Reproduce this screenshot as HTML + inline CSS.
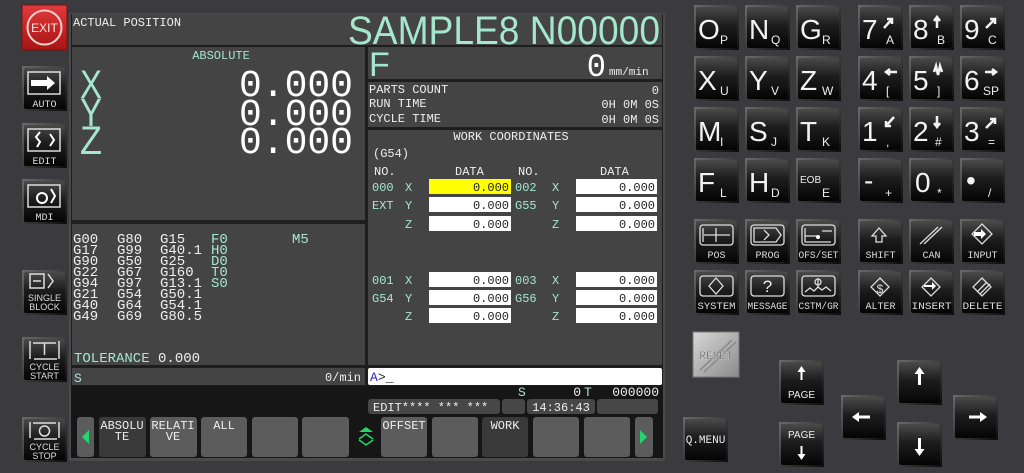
<!DOCTYPE html>
<html><head><meta charset="utf-8"><style>
html,body{margin:0;padding:0;background:#3b3a3f;width:1024px;height:473px;overflow:hidden}
svg{display:block}
.m{font-family:"Liberation Mono",monospace}
.s{font-family:"Liberation Sans",sans-serif}
</style></head><body>
<svg width="1024" height="473" viewBox="0 0 1024 473" xmlns="http://www.w3.org/2000/svg">
<defs>
<linearGradient id="kg" x1="0" y1="0" x2="0" y2="1">
<stop offset="0" stop-color="#4a4a4a"/><stop offset="0.45" stop-color="#1c1c1c"/><stop offset="1" stop-color="#050505"/>
</linearGradient>
<linearGradient id="kb" x1="0" y1="0" x2="1" y2="1">
<stop offset="0" stop-color="#6a6a6a"/><stop offset="1" stop-color="#0c0c0c"/>
</linearGradient>
<linearGradient id="rg" x1="0" y1="0" x2="1" y2="1">
<stop offset="0" stop-color="#d8d8d8"/><stop offset="1" stop-color="#8a8a8a"/>
</linearGradient>
<linearGradient id="eg" x1="0" y1="0" x2="0" y2="1">
<stop offset="0" stop-color="#e23a3a"/><stop offset="1" stop-color="#a81414"/>
</linearGradient>
<symbol id="k" viewBox="0 0 45 45">
<rect x="0" y="0" width="45" height="45" fill="url(#kb)"/>
<rect x="2" y="2" width="41" height="41" rx="2" fill="url(#kg)"/>
</symbol>
</defs>

<rect x="22" y="5" width="45" height="45" fill="url(#eg)" stroke="#7a1010"/>
<circle cx="44.5" cy="27.5" r="17" fill="none" stroke="#f2d0d0" stroke-width="2"/>
<text x="44.5" y="32" class="s" font-size="12" fill="#f6e6e6" text-anchor="middle">EXIT</text>

<use href="#k" x="22" y="66" width="45" height="45"/>
<rect x="28" y="72" width="32" height="22" fill="none" stroke="#ddd" stroke-width="1.5"/>
<path d="M31 80h16v-4l8 7-8 7v-4h-16z" fill="#fff"/>
<text x="44.5" y="107" class="m" font-size="10" fill="#ddd" text-anchor="middle">AUTO</text>

<use href="#k" x="22" y="123" width="45" height="45"/>
<rect x="28" y="129" width="32" height="22" fill="none" stroke="#ddd" stroke-width="1.5"/>
<path d="M40 132l-4 5 4 5-3 5M50 134l4 6-4 6" fill="none" stroke="#fff" stroke-width="2"/>
<text x="44.5" y="164" class="m" font-size="10" fill="#ddd" text-anchor="middle">EDIT</text>

<use href="#k" x="22" y="179" width="45" height="45"/>
<rect x="28" y="185" width="32" height="22" fill="none" stroke="#ddd" stroke-width="1.5"/>
<circle cx="42" cy="198" r="5" fill="none" stroke="#fff" stroke-width="2"/><path d="M51 189l4 7-4 7" fill="none" stroke="#fff" stroke-width="2"/>
<text x="44.5" y="220" class="m" font-size="10" fill="#ddd" text-anchor="middle">MDI</text>

<use href="#k" x="22" y="270" width="45" height="45"/>
<rect x="30" y="274" width="14" height="14" fill="none" stroke="#ddd" stroke-width="1.5"/><path d="M33 281h8M48 274l5 7-5 7" stroke="#ddd" fill="none" stroke-width="1.5"/>
<text x="44.5" y="301" class="s" font-size="9" fill="#ddd" text-anchor="middle">SINGLE</text>
<text x="44.5" y="310" class="s" font-size="9" fill="#ddd" text-anchor="middle">BLOCK</text>

<use href="#k" x="22" y="337" width="45" height="45"/>
<path d="M30 341v18M59 341v18M33 343h23M44.5 343v12M34 359h23" stroke="#ddd" fill="none" stroke-width="1.5"/>
<text x="44.5" y="370" class="s" font-size="9" fill="#ddd" text-anchor="middle">CYCLE</text>
<text x="44.5" y="379" class="s" font-size="9" fill="#ddd" text-anchor="middle">START</text>

<use href="#k" x="22" y="417" width="45" height="45"/>
<path d="M30 422v16M59 422v16M33 423h23M34 439h23" stroke="#ddd" fill="none" stroke-width="1.5"/><circle cx="44.5" cy="431" r="5" fill="none" stroke="#ddd" stroke-width="1.5"/>
<text x="44.5" y="450" class="s" font-size="9" fill="#ddd" text-anchor="middle">CYCLE</text>
<text x="44.5" y="459" class="s" font-size="9" fill="#ddd" text-anchor="middle">STOP</text>

<rect x="69" y="13" width="596" height="448" fill="#4a4a4a"/>
<rect x="71" y="14" width="592" height="444" fill="#1e1e1e"/>
<rect x="72" y="14" width="590" height="31" fill="#444"/>
<text x="73" y="26" class="m" font-size="12" fill="#eee">ACTUAL POSITION</text>
<text x="348" y="44" class="s" font-size="40" fill="#a5e6cf" textLength="312" lengthAdjust="spacingAndGlyphs">SAMPLE8 N00000</text>

<rect x="72" y="47" width="293" height="173" fill="#444"/>
<text x="221" y="59" class="m" font-size="12" fill="#a5e6cf" text-anchor="middle">ABSOLUTE</text>
<g class="s" font-size="40" fill="#a5e6cf">
<text x="80" y="98" textLength="22" lengthAdjust="spacingAndGlyphs">X</text>
<text x="80" y="126" textLength="22" lengthAdjust="spacingAndGlyphs">Y</text>
<text x="80" y="154" textLength="22" lengthAdjust="spacingAndGlyphs">Z</text>
</g>
<g class="m" font-size="38" fill="#fff" text-anchor="end">
<text x="353" y="96">0.000</text>
<text x="353" y="125">0.000</text>
<text x="353" y="153">0.000</text>
</g>

<rect x="72" y="224" width="293" height="141" fill="#444"/>
<g class="m" font-size="14" fill="#eee">
<text x="73" y="243"><tspan>G00</tspan><tspan x="117">G80</tspan><tspan x="160">G15</tspan><tspan x="211" fill="#a5e6cf">F0</tspan><tspan x="292" fill="#a5e6cf">M5</tspan></text>
<text x="73" y="254"><tspan>G17</tspan><tspan x="117">G99</tspan><tspan x="160">G40.1</tspan><tspan x="211" fill="#a5e6cf">H0</tspan></text>
<text x="73" y="265"><tspan>G90</tspan><tspan x="117">G50</tspan><tspan x="160">G25</tspan><tspan x="211" fill="#a5e6cf">D0</tspan></text>
<text x="73" y="276"><tspan>G22</tspan><tspan x="117">G67</tspan><tspan x="160">G160</tspan><tspan x="211" fill="#a5e6cf">T0</tspan></text>
<text x="73" y="287"><tspan>G94</tspan><tspan x="117">G97</tspan><tspan x="160">G13.1</tspan><tspan x="211" fill="#a5e6cf">S0</tspan></text>
<text x="73" y="298"><tspan>G21</tspan><tspan x="117">G54</tspan><tspan x="160">G50.1</tspan></text>
<text x="73" y="309"><tspan>G40</tspan><tspan x="117">G64</tspan><tspan x="160">G54.1</tspan></text>
<text x="73" y="320"><tspan>G49</tspan><tspan x="117">G69</tspan><tspan x="160">G80.5</tspan></text>
</g>
<text x="74" y="362" class="m" font-size="14" fill="#a5e6cf">TOLERANCE <tspan fill="#eee">0.000</tspan></text>

<rect x="72" y="368" width="293" height="17" fill="#444"/>
<text x="74" y="382" class="m" font-size="13" fill="#a5e6cf">S</text>
<text x="361" y="381" class="m" font-size="12" fill="#eee" text-anchor="end">0/min</text>

<rect x="368" y="47" width="294" height="32" fill="#444"/>
<text x="369" y="76" class="s" font-size="34" fill="#a5e6cf">F</text>
<text x="606" y="76" class="m" font-size="32" fill="#fff" text-anchor="end">0</text>
<text x="609" y="75" class="m" font-size="11" fill="#eee">mm/min</text>

<rect x="368" y="82" width="294" height="45" fill="#444"/>
<g class="m" font-size="12" fill="#eee">
<text x="369" y="93">PARTS COUNT</text><text x="659" y="94" text-anchor="end">0</text>
<text x="369" y="107">RUN TIME</text><text x="659" y="108" text-anchor="end">0H 0M 0S</text>
<text x="369" y="122">CYCLE TIME</text><text x="659" y="123" text-anchor="end">0H 0M 0S</text>
</g>

<rect x="368" y="130" width="294" height="235" fill="#444"/>
<g class="m" font-size="12" fill="#eee">
<text x="511" y="140" text-anchor="middle">WORK COORDINATES</text>
<text x="373" y="157">(G54)</text>
<text x="374" y="175">NO.</text><text x="455" y="175">DATA</text><text x="518" y="175">NO.</text><text x="600" y="175">DATA</text>
</g>
<g class="m" font-size="12" fill="#a5e6cf">
<text x="372" y="191">000</text><text x="405" y="191">X</text><text x="515" y="191">002</text><text x="552" y="191">X</text>
<text x="372" y="209">EXT</text><text x="405" y="209">Y</text><text x="515" y="209">G55</text><text x="552" y="209">Y</text>
<text x="405" y="228">Z</text><text x="552" y="228">Z</text>
<text x="372" y="284">001</text><text x="405" y="284">X</text><text x="515" y="284">003</text><text x="552" y="284">X</text>
<text x="372" y="302">G54</text><text x="405" y="302">Y</text><text x="515" y="302">G56</text><text x="552" y="302">Y</text>
<text x="405" y="320">Z</text><text x="552" y="320">Z</text>
</g>
<g fill="#fff">
<rect x="429" y="179" width="82" height="15" fill="#ffff00"/><rect x="576" y="179" width="81" height="15"/>
<rect x="429" y="197" width="82" height="15"/><rect x="576" y="197" width="81" height="15"/>
<rect x="429" y="216" width="82" height="15"/><rect x="576" y="216" width="81" height="15"/>
<rect x="429" y="272" width="82" height="15"/><rect x="576" y="272" width="81" height="15"/>
<rect x="429" y="290" width="82" height="15"/><rect x="576" y="290" width="81" height="15"/>
<rect x="429" y="308" width="82" height="15"/><rect x="576" y="308" width="81" height="15"/>
</g>
<g class="m" font-size="12" fill="#222" text-anchor="end">
<text x="509" y="191">0.000</text><text x="655" y="191">0.000</text>
<text x="509" y="209">0.000</text><text x="655" y="209">0.000</text>
<text x="509" y="228">0.000</text><text x="655" y="228">0.000</text>
<text x="509" y="284">0.000</text><text x="655" y="284">0.000</text>
<text x="509" y="302">0.000</text><text x="655" y="302">0.000</text>
<text x="509" y="320">0.000</text><text x="655" y="320">0.000</text>
</g>

<rect x="368" y="368" width="294" height="17" rx="2" fill="#fff"/>
<text x="370" y="381" class="m" font-size="13" fill="#2323d0">A<tspan fill="#222">&gt;_</tspan></text>

<rect x="71" y="386" width="592" height="72" fill="#161616"/>
<g class="m" font-size="13">
<text x="518" y="396" fill="#a5e6cf">S</text>
<text x="581" y="396" fill="#eee" text-anchor="end">0</text>
<text x="584" y="396" fill="#a5e6cf">T</text>
<text x="659" y="396" fill="#eee" text-anchor="end">000000</text>
</g>
<g fill="#474747">
<rect x="368" y="399" width="132" height="15" rx="3"/>
<rect x="502" y="399" width="23" height="15" rx="3"/>
<rect x="527" y="399" width="68" height="15" rx="3"/>
<rect x="597" y="399" width="61" height="15" rx="3"/>
</g>
<text x="373" y="411" class="m" font-size="12" fill="#eee">EDIT**** *** ***</text>
<text x="561" y="411" class="m" font-size="12" fill="#eee" text-anchor="middle">14:36:43</text>

<g fill="#5c5c5c">
<rect x="77" y="417" width="17" height="40" rx="3"/>
<rect x="99" y="417" width="47" height="40" rx="3" fill="#3a3a3a"/>
<rect x="150" y="417" width="47" height="40" rx="3"/>
<rect x="201" y="417" width="46" height="40" rx="3"/>
<rect x="252" y="417" width="46" height="40" rx="3"/>
<rect x="302" y="417" width="47" height="40" rx="3"/>
<rect x="381" y="417" width="46" height="40" rx="3"/>
<rect x="432" y="417" width="46" height="40" rx="3"/>
<rect x="482" y="417" width="46" height="40" rx="3" fill="#3a3a3a"/>
<rect x="533" y="417" width="46" height="40" rx="3"/>
<rect x="584" y="417" width="46" height="40" rx="3"/>
<rect x="635" y="417" width="18" height="40" rx="3"/>
</g>
<path d="M82 437l7-7v14z" fill="#22d86a"/>
<path d="M640 430l7 7-7 7z" fill="#22d86a"/>
<path d="M359 432l7-5 7 5z" fill="#22d86a"/><path d="M359 439l7-5 7 5M359 440l7 5 7-5" fill="none" stroke="#22d86a" stroke-width="1.5"/>
<g class="m" font-size="12" fill="#eee" text-anchor="middle">
<text x="122" y="429">ABSOLU</text><text x="122" y="440">TE</text>
<text x="173" y="429">RELATI</text><text x="173" y="440">VE</text>
<text x="224" y="429">ALL</text>
<text x="404" y="429">OFFSET</text>
<text x="505" y="429">WORK</text>
</g>

<g>
<use href="#k" x="694" y="5" width="45" height="45"/><use href="#k" x="745" y="5" width="45" height="45"/><use href="#k" x="796" y="5" width="45" height="45"/>
<use href="#k" x="858" y="5" width="45" height="45"/><use href="#k" x="909" y="5" width="45" height="45"/><use href="#k" x="960" y="5" width="45" height="45"/>
<use href="#k" x="694" y="56" width="45" height="45"/><use href="#k" x="745" y="56" width="45" height="45"/><use href="#k" x="796" y="56" width="45" height="45"/>
<use href="#k" x="858" y="56" width="45" height="45"/><use href="#k" x="909" y="56" width="45" height="45"/><use href="#k" x="960" y="56" width="45" height="45"/>
<use href="#k" x="694" y="107" width="45" height="45"/><use href="#k" x="745" y="107" width="45" height="45"/><use href="#k" x="796" y="107" width="45" height="45"/>
<use href="#k" x="858" y="107" width="45" height="45"/><use href="#k" x="909" y="107" width="45" height="45"/><use href="#k" x="960" y="107" width="45" height="45"/>
<use href="#k" x="694" y="158" width="45" height="45"/><use href="#k" x="745" y="158" width="45" height="45"/><use href="#k" x="796" y="158" width="45" height="45"/>
<use href="#k" x="858" y="158" width="45" height="45"/><use href="#k" x="909" y="158" width="45" height="45"/><use href="#k" x="960" y="158" width="45" height="45"/>
<use href="#k" x="694" y="219" width="45" height="45"/><use href="#k" x="745" y="219" width="45" height="45"/><use href="#k" x="796" y="219" width="45" height="45"/>
<use href="#k" x="858" y="219" width="45" height="45"/><use href="#k" x="909" y="219" width="45" height="45"/><use href="#k" x="960" y="219" width="45" height="45"/>
<use href="#k" x="694" y="270" width="45" height="45"/><use href="#k" x="745" y="270" width="45" height="45"/><use href="#k" x="796" y="270" width="45" height="45"/>
<use href="#k" x="858" y="270" width="45" height="45"/><use href="#k" x="909" y="270" width="45" height="45"/><use href="#k" x="960" y="270" width="45" height="45"/>
</g>
<g class="s" fill="#f2f2f2" font-size="28">
<text x="698" y="39">O</text><text x="749" y="39">N</text><text x="800" y="39">G</text>
<text x="862" y="39">7</text><text x="913" y="39">8</text><text x="964" y="39">9</text>
<text x="698" y="90">X</text><text x="749" y="90">Y</text><text x="800" y="90">Z</text>
<text x="862" y="90">4</text><text x="913" y="90">5</text><text x="964" y="90">6</text>
<text x="698" y="141">M</text><text x="749" y="141">S</text><text x="800" y="141">T</text>
<text x="862" y="141">1</text><text x="913" y="141">2</text><text x="964" y="141">3</text>
<text x="698" y="192">F</text><text x="749" y="192">H</text>
<text x="864" y="190">-</text><text x="915" y="192">0</text><text x="966" y="190">•</text>
</g>
<text x="800" y="183" class="s" font-size="10" fill="#eee">EOB</text>
<g class="s" fill="#eee" font-size="12">
<text x="720" y="44">P</text><text x="771" y="44">Q</text><text x="822" y="44">R</text>
<text x="886" y="44">A</text><text x="937" y="44">B</text><text x="988" y="44">C</text>
<text x="720" y="95">U</text><text x="771" y="95">V</text><text x="822" y="95">W</text>
<text x="886" y="95">[</text><text x="937" y="95">]</text><text x="983" y="95">SP</text>
<text x="720" y="146">I</text><text x="771" y="146">J</text><text x="822" y="146">K</text>
<text x="886" y="146">,</text><text x="935" y="146">#</text><text x="988" y="146">=</text>
<text x="720" y="197">L</text><text x="771" y="197">D</text><text x="822" y="197">E</text>
<text x="885" y="197">+</text><text x="937" y="197">*</text><text x="988" y="197">/</text>
</g>
<g stroke="#f2f2f2" stroke-width="2.5" fill="none">
<path d="M884 28l8-9M887 19h5v5"/><path d="M937 28v-10M934 21l3-4 3 4"/><path d="M986 28l9-9M990 19h5v5"/>
<path d="M897 72h-10M890 69l-4 3 4 3"/><path d="M934 72l2-6 2 9 2-9 2 6"/><path d="M985 72h10M992 69l4 3-4 3"/>
<path d="M894 117l-8 9M886 121v5h5"/><path d="M937 116v10M934 123l3 4 3-4"/><path d="M986 128l9-9M990 119h5v5"/>
</g>
<g fill="none" stroke="#ddd" stroke-width="1.3">
<rect x="700" y="225" width="33" height="20" rx="3"/><path d="M703 228v14M704 235h26M716 228v14"/>
<rect x="751" y="225" width="33" height="20" rx="3"/><path d="M754 228h22l5 7-5 7h-22z"/><path d="M764 230l5 5-5 5"/>
<rect x="802" y="225" width="33" height="20" rx="3"/><path d="M805 228v14h26M805 236h12M822 231h10"/>
<rect x="700" y="276" width="33" height="20" rx="3"/><path d="M716 278l7 8-7 8-7-8z"/>
<rect x="751" y="276" width="33" height="20" rx="3"/>
<rect x="802" y="276" width="33" height="20" rx="3"/><path d="M805 292l5-4 4 3 4-4 4 3 4-3 5 4M818 278v10"/><circle cx="818" cy="282" r="3"/>
<path d="M876 242v-6h-4l7-8 7 8h-4v6z"/>
<path d="M920 244l18-17M924 244l18-17"/>
<path d="M982 224l10 10-10 10-10-10z"/>
<path d="M880 278l9 9-9 9-9-9z"/><path d="M931 278l9 9-9 9-9-9z"/><path d="M982 278l9 9-9 9-9-9z"/><path d="M977 292l10-10M980 294l10-10"/>
</g>
<circle cx="818" cy="237" r="2" fill="#fff"/>
<path d="M974 232h7v-3l5 5-5 5v-3h-7z" fill="#fff"/>
<path d="M924 285h8v-3l4 4-4 4v-3h-8z" fill="#fff"/>
<text x="767.5" y="292" class="s" font-size="17" fill="#eee" text-anchor="middle">?</text>
<text x="880" y="293" class="s" font-size="12" fill="#ddd" text-anchor="middle">$</text>
<g class="m" font-size="10" fill="#ddd" text-anchor="middle">
<text x="716.5" y="258">POS</text><text x="767.5" y="258">PROG</text><text x="818.5" y="258" textLength="40" lengthAdjust="spacingAndGlyphs">OFS/SET</text>
<text x="880.5" y="258">SHIFT</text><text x="931.5" y="258">CAN</text><text x="982.5" y="258">INPUT</text>
<text x="716.5" y="309" textLength="38" lengthAdjust="spacingAndGlyphs">SYSTEM</text><text x="767.5" y="309" textLength="40" lengthAdjust="spacingAndGlyphs">MESSAGE</text><text x="818.5" y="309" textLength="40" lengthAdjust="spacingAndGlyphs">CSTM/GR</text>
<text x="880.5" y="309">ALTER</text><text x="931.5" y="309" textLength="40" lengthAdjust="spacingAndGlyphs">INSERT</text><text x="982.5" y="309" textLength="40" lengthAdjust="spacingAndGlyphs">DELETE</text>
</g>

<rect x="693" y="332" width="46" height="45" fill="url(#rg)" stroke="#777"/>
<path d="M700 370l32-30M704 372l32-30" stroke="#888" stroke-width="1.5"/>
<text x="716" y="359" class="m" font-size="11" fill="#444" text-anchor="middle" stroke="#eee" stroke-width="0.3">RESET</text>

<use href="#k" x="683" y="417" width="45" height="45"/>
<text x="705.5" y="443" class="m" font-size="11" fill="#eee" text-anchor="middle">Q.MENU</text>
<use href="#k" x="779" y="360" width="45" height="45"/>
<use href="#k" x="779" y="422" width="45" height="45"/>
<use href="#k" x="841" y="395" width="45" height="45"/>
<use href="#k" x="897" y="360" width="45" height="45"/>
<use href="#k" x="897" y="422" width="45" height="45"/>
<use href="#k" x="953" y="395" width="45" height="45"/>
<g fill="#fff">
<path d="M801.5 366l-4 6h3v8h2v-8h3z"/>
<path d="M801.5 460l-4-6h3v-8h2v8h3z"/>
<path d="M919.5 367l-5 7h3.5v11h3v-11h3.5z"/>
<path d="M919.5 456l-5-7h3.5v-11h3v11h3.5z"/>
<path d="M852 417l7-5v3.5h11v3h-11v3.5z"/>
<path d="M987 417l-7-5v3.5h-11v3h11v3.5z"/>
</g>
<text x="801.5" y="398" class="s" font-size="10" fill="#eee" text-anchor="middle">PAGE</text>
<text x="801.5" y="438" class="s" font-size="10" fill="#eee" text-anchor="middle">PAGE</text>
</svg>
</body></html>
